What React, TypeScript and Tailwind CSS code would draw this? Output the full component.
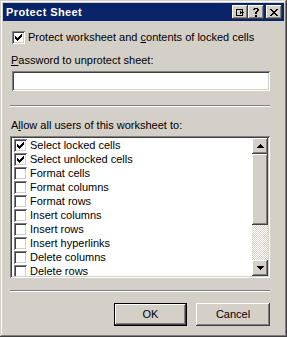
import React from 'react';

type PixProps = { rows: string[]; color?: string; className?: string };

// tiny pixel-art glyph (check marks, arrows, caption icons)
function Pix({ rows, color = '#000', className = '' }: PixProps) {
    const w = rows[0].length;
    const h = rows.length;
    return (
        <svg width={w} height={h} viewBox={`0 0 ${w} ${h}`} shapeRendering="crispEdges" className={className}>
            {rows.map((r, y) =>
                r.split('').map((c, x) =>
                    c === 'X' ? <rect key={`${x}-${y}`} x={x} y={y} width={1} height={1} fill={color} /> : null
                )
            )}
        </svg>
    );
}

const CHECK = ['......X', '.....XX', 'X...XXX', 'XX.XXX.', 'XXXXX..', '.XXX...', '..X....'];
const CLOSE = ['XX....XX', '.XX..XX.', '..XXXX..', '...XX...', '..XXXX..', '.XX..XX.', 'XX....XX'];
const HELP = ['.XXXX.', 'XX..XX', '....XX', '...XX.', '..XX..', '..XX..', '......', '..XX..', '..XX..'];
const COLLAPSE = ['XXXXXXX.', 'X.....X.', 'X...X.X.', 'X...XXXX', 'X...X.X.', 'X.....X.', 'XXXXXXX.'];
const UP = ['...X...', '..XXX..', '.XXXXX.', 'XXXXXXX'];
const DOWN = ['XXXXXXX', '.XXXXX.', '..XXX..', '...X...'];

const raised =
    'shadow-[inset_-1px_-1px_#404040,inset_1px_1px_#ffffff,inset_-2px_-2px_#808080,inset_2px_2px_#d4d0c8]';
const sunken =
    'shadow-[inset_1px_1px_#808080,inset_-1px_-1px_#ffffff,inset_2px_2px_#404040,inset_-2px_-2px_#d4d0c8]';

function CheckBox({ checked }: { checked: boolean }) {
    return (
        <div className={`flex h-[13px] w-[13px] shrink-0 items-center justify-center bg-white ${sunken}`}>
            {checked && <Pix rows={CHECK} />}
        </div>
    );
}

function Separator() {
    return (
        <div className="flex flex-col">
            <div className="h-px bg-[#808080]" />
            <div className="h-px bg-white" />
        </div>
    );
}

const items = [
    { label: 'Select locked cells', checked: true },
    { label: 'Select unlocked cells', checked: true },
    { label: 'Format cells', checked: false },
    { label: 'Format columns', checked: false },
    { label: 'Format rows', checked: false },
    { label: 'Insert columns', checked: false },
    { label: 'Insert rows', checked: false },
    { label: 'Insert hyperlinks', checked: false },
    { label: 'Delete columns', checked: false },
    { label: 'Delete rows', checked: false },
];

export default function App() {
    return (
        <div
            className={`flex h-[337px] w-[287px] flex-col bg-[#d4d0c8] p-[3px] font-['Liberation_Sans',Arial,sans-serif] text-[11px] leading-[13px] text-black shadow-[inset_-1px_-1px_#404040,inset_1px_1px_#d4d0c8,inset_-2px_-2px_#808080,inset_2px_2px_#ffffff]`}
        >
            <div className="flex h-[18px] items-center bg-[#0a246a] pl-[3px] pr-[2px]">
                <span className="flex-1 font-bold tracking-[0.4px] text-white">Protect Sheet</span>
                <div className={`flex h-[14px] w-[16px] items-center justify-center bg-[#d4d0c8] ${raised}`}>
                    <Pix rows={COLLAPSE} />
                </div>
                <div className={`flex h-[14px] w-[16px] items-center justify-center bg-[#d4d0c8] ${raised}`}>
                    <Pix rows={HELP} />
                </div>
                <div className={`ml-[2px] flex h-[14px] w-[16px] items-center justify-center bg-[#d4d0c8] ${raised}`}>
                    <Pix rows={CLOSE} />
                </div>
            </div>

            <div className="flex flex-1 flex-col pl-[7px] pr-[14px]">
                <div className="mt-[10px] flex items-center gap-[3px] pl-[2px]">
                    <CheckBox checked />
                    <span>
                        Protect worksheet and <span className="underline">c</span>ontents of locked cells
                    </span>
                </div>

                <div className="mt-[10px] pl-[1px]">
                    <span className="underline">P</span>assword to unprotect sheet:
                </div>
                <div className={`ml-[2px] mt-[4px] h-[20px] bg-white ${sunken}`} />

                <div className="mt-[14px]">
                    <Separator />
                </div>

                <div className="mt-[12px] pl-[1px]">
                    A<span className="underline">l</span>low all users of this worksheet to:
                </div>

                <div className={`mt-[4px] flex h-[142px] overflow-hidden bg-white p-[2px] ${sunken}`}>
                    <div className="flex flex-1 flex-col overflow-hidden">
                        {items.map((it) => (
                            <div key={it.label} className="flex h-[14px] shrink-0 items-center gap-[3px] pl-[2px] pt-[1px]">
                                <CheckBox checked={it.checked} />
                                <span>{it.label}</span>
                            </div>
                        ))}
                    </div>
                    <div className="flex w-[16px] flex-col">
                        <div className={`flex h-[16px] items-center justify-center bg-[#d4d0c8] ${raised}`}>
                            <Pix rows={UP} />
                        </div>
                        <div className={`h-[71px] bg-[#d4d0c8] ${raised}`} />
                        <div className="flex-1 bg-[repeating-conic-gradient(#ffffff_0%_25%,#d4d0c8_0%_50%)] bg-[length:2px_2px]" />
                        <div className={`flex h-[16px] items-center justify-center bg-[#d4d0c8] ${raised}`}>
                            <Pix rows={DOWN} />
                        </div>
                    </div>
                </div>

                <div className="mt-[12px]">
                    <Separator />
                </div>

                <div className="mt-[11px] flex justify-end gap-[9px]">
                    <div className="h-[23px] w-[73px] border border-black">
                        <div className={`flex h-full items-center justify-center ${raised}`}>OK</div>
                    </div>
                    <div className={`flex h-[23px] w-[74px] items-center justify-center ${raised}`}>Cancel</div>
                </div>
            </div>
        </div>
    );
}
